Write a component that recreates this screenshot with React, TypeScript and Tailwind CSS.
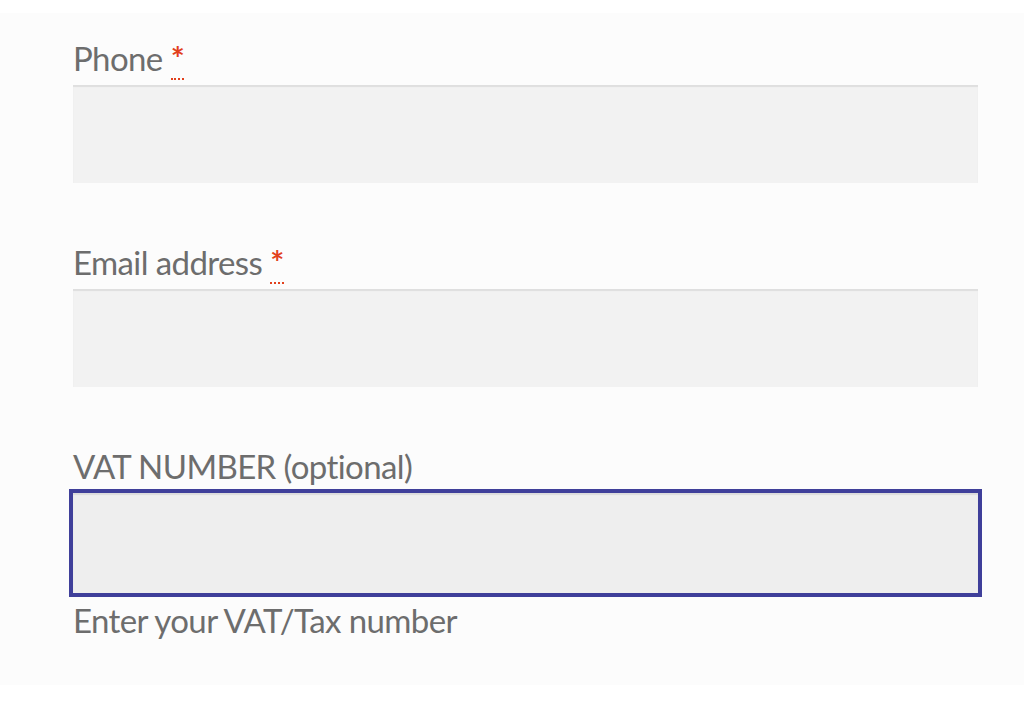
import React from "react";

const textCls = "text-[33px] leading-[48px] tracking-[-0.6px] text-[#6d6d6d]";

function Required() {
  return (
    <abbr
      title="required"
      className="ml-2 font-bold text-[#e2401c] no-underline border-b-2 border-dotted border-[#e2401c] leading-none"
    >
      *
    </abbr>
  );
}

function Field({
  label,
  required,
  focused,
  help,
}: {
  label: string;
  required?: boolean;
  focused?: boolean;
  help?: string;
}) {
  return (
    <div className="mb-[55px]">
      <label className={"block " + textCls}>
        {label}
        {required && <Required />}
      </label>
      <div className="mt-[3px]">
        <input
          className={
            focused
              ? "block w-full h-[100px] bg-[#eeeeee] outline-4 outline-[#3f3f9a] shadow-[inset_0_2px_1px_rgba(0,0,0,0.08)]"
              : "block w-full h-[98px] bg-[#f2f2f2] shadow-[inset_0_2px_1px_rgba(0,0,0,0.08)]"
          }
        />
      </div>
      {help && <p className={"mt-[3px] " + textCls}>{help}</p>}
    </div>
  );
}

export default function App() {
  return (
    <div className="w-[1024px] h-[702px] bg-white pt-[13px] font-['Lato',sans-serif]">
      <div className="h-[672px] bg-[#fcfcfc] pl-[73px] pr-[46px] pt-[21px]">
        <Field label="Phone" required />
        <Field label="Email address" required />
        <Field label="VAT NUMBER (optional)" focused help="Enter your VAT/Tax number" />
      </div>
    </div>
  );
}
